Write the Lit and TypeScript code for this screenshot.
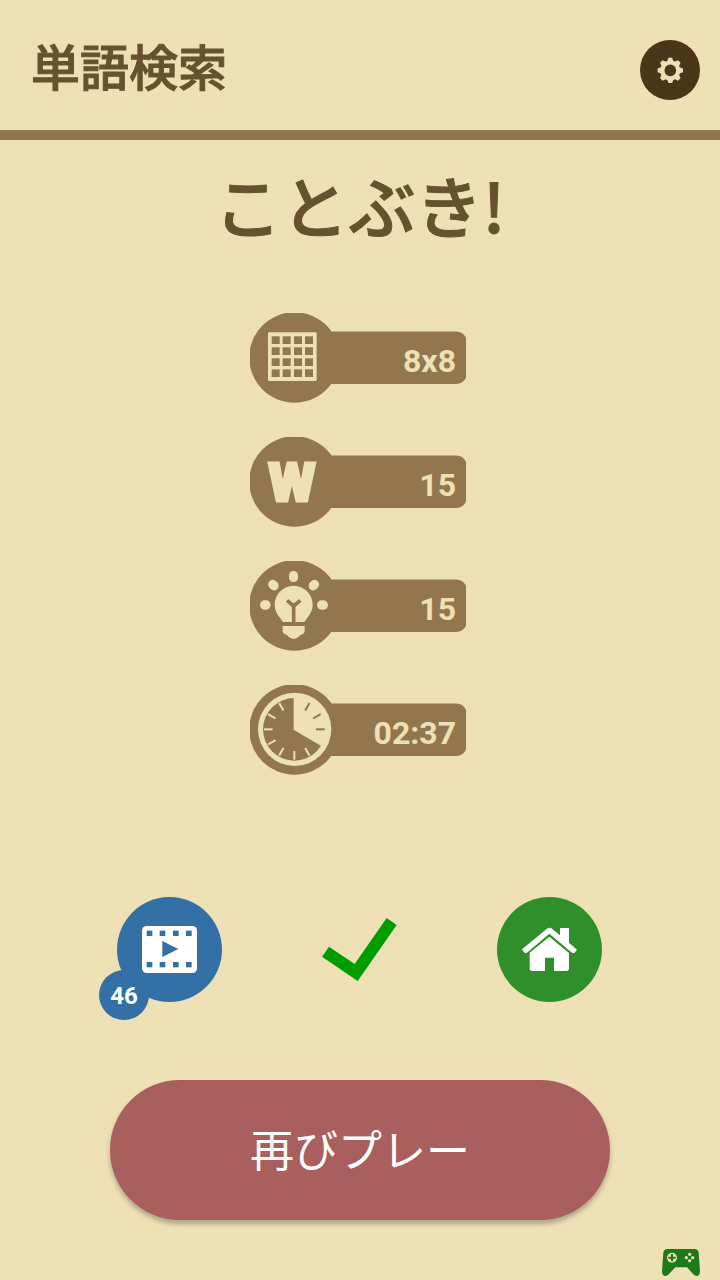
import { LitElement, html, css, svg } from "lit";
import { customElement, property } from "lit/decorators.js";

const INK = "#92774e";
const PAPER = "#ede0b4";

const gridIcon = svg`
  <g transform="scale(0.33333) translate(-30 -39)">
    <rect x="84" y="97" width="146" height="146" rx="4" fill=${PAPER} />
    ${[95, 128, 162, 195].map((x) =>
      [109, 142, 175, 208].map(
        (y) => svg`<rect x=${x} y=${y} width="24" height="23" fill=${INK} />`
      )
    )}
  </g>`;

const wordIcon = svg`
  <text class="letter" x="42" y="64" text-anchor="middle">W</text>`;

const bulbIcon = svg`
  <g transform="scale(0.33333) translate(-30 -33)" fill=${PAPER}>
    <rect x="147" y="63" width="27" height="33" rx="13" />
    <rect x="60" y="151" width="32" height="28" rx="14" />
    <rect x="231" y="151" width="33" height="28" rx="14" />
    <rect x="84" y="91" width="33" height="28" rx="14" transform="rotate(48 100 105)" />
    <rect x="205" y="91" width="33" height="28" rx="14" transform="rotate(-48 222 105)" />
    <path d="M129 216C119 201 104 187 104 164C104 132 130 107 161 107C192 107 218 132 218 164C218 187 203 201 193 216Z" />
    <path d="M128 228H194V244Q194 250 187 253L180 256C176 262 168 267 161 267C154 267 146 262 142 256L135 253Q128 250 128 244Z" />
    <path d="M161 216V166M141 151L161 168L181 151" fill="none" stroke=${INK} stroke-width="11" />
  </g>`;

const clockIcon = svg`
  <g transform="scale(0.33333) translate(-30 -30)">
    <circle cx="164" cy="163" r="110" fill=${PAPER} />
    <circle cx="163" cy="163" r="94" fill=${INK} />
    <path d="M161 66V164L245 214A98 98 0 0 0 161 66Z" fill=${PAPER} />
    ${[1, 2, 3, 5, 6, 7, 8, 9, 10, 11].map(
      (h) => svg`<path d="M163 72V98" stroke-width="6" stroke=${h < 4 ? INK : PAPER}
        transform="rotate(${h * 30} 163 163)" />`
    )}
  </g>`;

@customElement("stat-badge")
export class StatBadge extends LitElement {
  @property() label = "";
  @property() value = "";
  @property({ attribute: false }) icon: unknown;

  static styles = css`
    :host {
      display: grid;
      width: 216px;
      height: 90px;
    }
    .shape,
    .value {
      grid-area: 1 / 1;
    }
    .shape {
      display: block;
      overflow: hidden;
    }
    .value {
      justify-self: end;
      align-self: center;
      padding: 6px 10px 0 0;
      color: #ede0b4;
      font: 700 32px/40px Roboto, sans-serif;
    }
    .letter {
      font: 900 54px Roboto, sans-serif;
      fill: #ede0b4;
      stroke: #ede0b4;
      stroke-width: 3px;
    }
  `;

  render() {
    return html`
      <svg class="shape" width="216" height="90" viewBox="0 0 216 90" role="img" aria-label=${this.label}>
        <circle cx="44.5" cy="44.5" r="45.3" fill=${INK} />
        <rect x="60" y="18.5" width="157" height="52.5" rx="11" fill=${INK} />
        ${this.icon}
      </svg>
      <span class="value">${this.value}</span>
    `;
  }
}

@customElement("app-root")
export class AppRoot extends LitElement {
  static styles = css`
    :host {
      display: flex;
      flex-direction: column;
      min-height: 100vh;
      background: #ede0b4;
      color: #67522f;
      font-family: Roboto, "Noto Sans CJK JP", sans-serif;
    }
    * {
      box-sizing: border-box;
    }
    button {
      border: 0;
      margin: 0;
      padding: 0;
      background: none;
      font: inherit;
      color: #fff;
      cursor: pointer;
    }
    svg {
      display: block;
    }
    .bar {
      display: flex;
      align-items: center;
      justify-content: space-between;
      height: 140px;
      padding: 0 20px 0 31px;
      border-bottom: 10px solid #92774e;
    }
    .title,
    .cheer {
      margin: 0;
      font-family: "Noto Sans CJK JP", sans-serif;
      font-weight: 500;
      -webkit-text-stroke: 1px #67522f;
    }
    .title {
      font-size: 49px;
      line-height: 72px;
    }
    .settings {
      margin-top: 10px;
      width: 60px;
      height: 60px;
      border-radius: 50%;
      background: #4c361a;
    }
    .cheer {
      padding: 16px 0 24px;
      text-align: center;
      font-size: 67px;
      line-height: 96px;
    }
    .stats {
      display: flex;
      flex-direction: column;
      align-items: center;
      gap: 34px;
      margin-top: 37px;
      padding-right: 4px;
    }
    .actions {
      display: flex;
      justify-content: center;
      gap: 85px;
      margin-top: 122px;
      padding-right: 1px;
    }
    .round {
      position: relative;
      width: 105px;
      height: 105px;
      border-radius: 50%;
    }
    .video {
      background: #3270a6;
    }
    .home {
      background: #2f902b;
    }
    .count {
      position: absolute;
      left: -18px;
      bottom: -18px;
      width: 50px;
      height: 50px;
      border-radius: 50%;
      background: #3270a6;
      font: 700 24px/52px Roboto, sans-serif;
    }
    .again {
      align-self: center;
      width: calc(100% - 220px);
      height: 140px;
      margin-top: 78px;
      padding-bottom: 4px;
      border-radius: 70px;
      background: #a95f5d;
      box-shadow: 0 4px 5px rgba(0, 0, 0, 0.26);
      font-family: "Noto Sans CJK JP", sans-serif;
      font-size: 44px;
      line-height: 64px;
    }
    .foot {
      display: flex;
      justify-content: flex-end;
      margin-top: auto;
      padding: 0 20px 4px;
    }
  `;

  render() {
    return html`
      <header class="bar">
        <h1 class="title">単語検索</h1>
        <button class="settings" aria-label="設定">
          <svg width="60" height="60" viewBox="0 0 60 60">
            <g transform="translate(30.3 30.4)" fill=${PAPER}>
              ${[0, 45, 90, 135, 180, 225, 270, 315].map(
                (a) => svg`<path d="M-3.6 -8L-1.8 -12.7H1.8L3.6 -8Z" transform="rotate(${a})" />`
              )}
              <circle r="10" />
              <circle r="5.8" fill="#4c361a" />
            </g>
          </svg>
        </button>
      </header>
      <h2 class="cheer">ことぶき!</h2>
      <section class="stats">
        <stat-badge label="グリッド" value="8x8" .icon=${gridIcon}></stat-badge>
        <stat-badge label="単語" value="15" .icon=${wordIcon}></stat-badge>
        <stat-badge label="ヒント" value="15" .icon=${bulbIcon}></stat-badge>
        <stat-badge label="時間" value="02:37" .icon=${clockIcon}></stat-badge>
      </section>
      <section class="actions">
        <button class="round video" aria-label="動画">
          <svg width="105" height="105" viewBox="81 36 315 315">
            <rect x="156" y="123" width="165" height="141" rx="14" fill="#fff" />
            <g fill="#3270a6">
              ${[170, 209, 249, 288].map(
                (x) => svg`<rect x=${x} y="137" width="17" height="16" /><rect x=${x} y="231" width="17" height="16" />`
              )}
              <path d="M217 168L265 192L217 216Z" />
            </g>
          </svg>
          <span class="count">46</span>
        </button>
        <svg width="105" height="105" viewBox="21 -9 315 315" role="img" aria-label="完了">
          <path transform="translate(-60 0)" d="M147 140L224 192L320 54L350 75L233 243L126 170Z" fill="#009c00" />
        </svg>
        <button class="round home" aria-label="ホーム">
          <svg width="105" height="105" viewBox="51 36 315 315" fill="#fff">
            <path d="M208 155L267 204V250Q267 258 259 258H222V218H195V258H157Q149 258 149 250V203Z" />
            <path d="M126 193L200 132Q208 125 217 132L240 151V129H267V173L291 194L283 204Q279 205 276 203L208 146L141 203Q135 206 132 202Z" />
          </svg>
        </button>
      </section>
      <button class="again">再びプレー</button>
      <footer class="foot">
        <button aria-label="ゲーム">
          <svg width="38" height="27" viewBox="66 57 114 81">
            <path d="M82 57H164Q174 57 176 68L180 124C180 134 176 138 170 138Q164 138 160 133L141 112H106L86 133Q82 138 76 138C70 138 66 134 66 124L70 68Q72 57 82 57Z" fill="#1c7a19" />
            <circle cx="96" cy="83" r="15" fill=${PAPER} />
            <path d="M96 72V94M85 83H107" stroke="#1c7a19" stroke-width="6" />
            <g fill=${PAPER}>
              <circle cx="149" cy="73" r="5" /><circle cx="149" cy="92" r="5" />
              <circle cx="139" cy="83" r="5" /><circle cx="158" cy="83" r="5" />
            </g>
          </svg>
        </button>
      </footer>
    `;
  }
}
